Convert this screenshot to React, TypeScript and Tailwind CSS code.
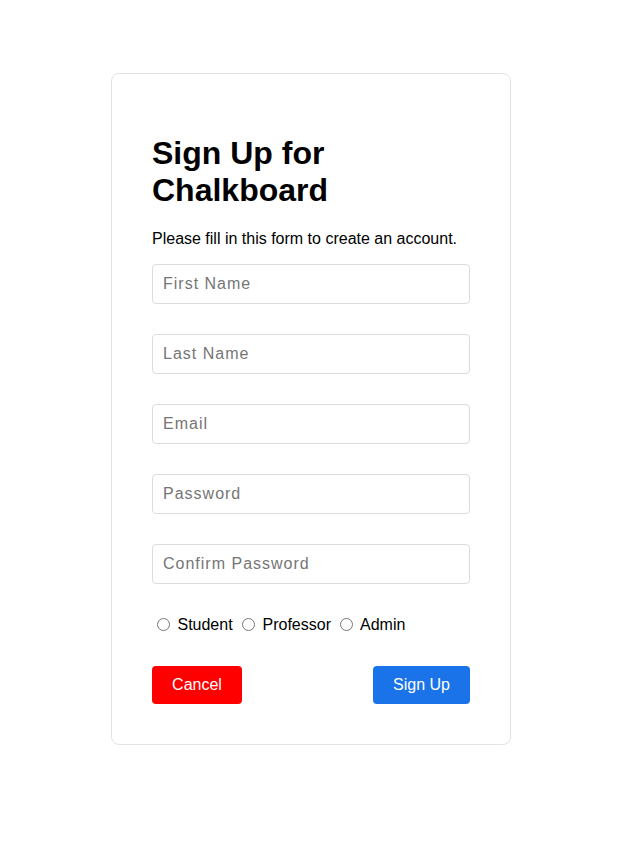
import React from "react";

const FIELDS = [
  { name: "firstName", placeholder: "First Name", type: "text" },
  { name: "lastName", placeholder: "Last Name", type: "text" },
  { name: "email", placeholder: "Email", type: "email" },
  { name: "password", placeholder: "Password", type: "password" },
  { name: "confirmPassword", placeholder: "Confirm Password", type: "password" },
];

const ROLES = ["Student", "Professor", "Admin"];

export default function App() {
  return (
    <div className="min-h-[843px] bg-white pt-[73px] font-['Liberation_Sans',Arial,sans-serif] text-black">
      <form
        className="ml-[111px] w-[400px] rounded-lg border border-[#e3e3e3] bg-white p-10"
        onSubmit={(e) => e.preventDefault()}
      >
        <h1 className="mt-[21px] mb-[21px] text-[32px] font-bold leading-[36.8px]">
          Sign Up for
          <br />
          Chalkboard
        </h1>
        <p className="mb-4 text-base leading-[18.4px]">Please fill in this form to create an account.</p>

        <div className="flex flex-col gap-[30px]">
          {FIELDS.map((f) => (
            <input
              key={f.name}
              name={f.name}
              type={f.type}
              placeholder={f.placeholder}
              className="h-10 w-full rounded-[4px] border border-[#dcdcdc] px-[10px] text-base tracking-[1px] outline-none placeholder:text-[#757575]"
            />
          ))}
        </div>

        <div className="mt-[31px] text-base leading-[18.4px]">
          {ROLES.map((r) => (
            <label key={r} className="inline">
              <input type="radio" name="role" value={r} className="mt-[3px] mr-[3px] ml-[5px] align-[-1px]" /> {r}{" "}
            </label>
          ))}
        </div>

        <div className="mt-[32px] flex items-center justify-between">
          <button
            type="button"
            className="h-[38px] w-[90px] rounded-[4px] bg-[#ff0000] text-base text-white"
          >
            Cancel
          </button>
          <button
            type="submit"
            className="h-[38px] w-[97px] rounded-[4px] bg-[#1a73e8] text-base text-white"
          >
            Sign Up
          </button>
        </div>
      </form>
    </div>
  );
}
